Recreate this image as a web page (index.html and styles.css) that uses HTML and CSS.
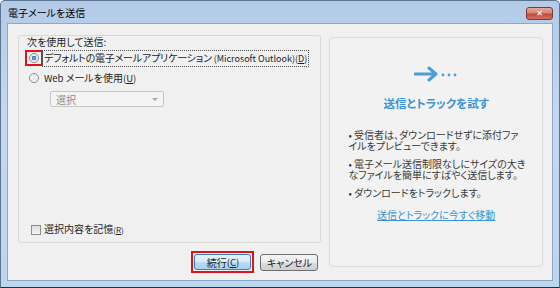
FILE: index.html
```html
<!DOCTYPE html>
<html>
  <head>
    <meta http-equiv="Content-type" content="text/html; charset=utf-8" />
    <link rel="stylesheet" href="styles.css">
  </head>
  <body>
    <div class="window">
      <div class="titlebar">
        <span class="title">電子メールを送信</span>
        <span class="close">&#x2715;</span>
      </div>
      <div class="client">
        <div class="leftcol">
          <div class="groupbox">
            <p class="caption">次を使用して送信:</p>
            <div class="row row1">
              <span class="hl"><span class="radio checked"></span></span>
              <span class="label focus tight">デフォルトの電子メールアプリケーション <span class="lat narrow">(Microsoft Outlook)(<u>D</u>)</span></span>
            </div>
            <div class="row row2">
              <span class="hl off"><span class="radio"></span></span>
              <span class="label"><span class="lat">Web</span> メールを使用<span class="lat">(<u>U</u>)</span></span>
            </div>
            <div class="select">
              <span>選択</span>
              <span class="caret"></span>
            </div>
            <div class="row remember">
              <span class="check"></span>
              <span class="label">選択内容を記憶<span class="lat small">(<u>R</u>)</span></span>
            </div>
          </div>
          <div class="buttons">
            <span class="hlbtn"><button class="btn default">続行<span class="lat">(<u>C</u>)</span></button></span>
            <button class="btn">キャンセル</button>
          </div>
        </div>
        <div class="panel">
          <svg class="arrow" width="44" height="16" viewBox="0 0 44 16">
            <path d="M1 8 H22 M15 2 L22 8 L15 14" fill="none" stroke="#4a9fd6" stroke-width="3" stroke-linecap="round" stroke-linejoin="round"/>
            <circle cx="29" cy="9" r="1.4" fill="#4a9fd6"/>
            <circle cx="35" cy="9" r="1.4" fill="#4a9fd6"/>
            <circle cx="41" cy="9" r="1.4" fill="#4a9fd6"/>
          </svg>
          <p class="ptitle">送信とトラックを試す</p>
          <p class="bullet">• 受信者は、ダウンロードせずに添付ファ<br>イルをプレビューできます。</p>
          <p class="bullet">• 電子メール送信制限なしにサイズの大き<br>なファイルを簡単にすばやく送信します。</p>
          <p class="bullet">• ダウンロードをトラックします。</p>
          <a class="link" href="#">送信とトラックに今すぐ移動</a>
        </div>
      </div>
    </div>
  </body>
</html>
```

FILE: styles.css
```css
/* base */
html,body{margin:0;padding:0;}
p{margin:0;padding:0}
body{font-family:"Noto Sans CJK JP","Liberation Sans",sans-serif;font-size:10px;color:#1e1e1e;font-feature-settings:"palt";}

/* frame */
.window{width:560px;height:288px;box-sizing:border-box;display:flex;flex-direction:column;padding:0 6px 6px;
	border:1px solid #5a7492;border-bottom-color:#1f3346;border-radius:5px 5px 0 0;
	background:linear-gradient(to bottom,#b3cbe7 0%,#c4d9ef 40%,#bed5ee 100%);}
.titlebar{height:22px;flex-shrink:0;display:flex;align-items:center;justify-content:space-between;}
.title{padding-left:1px;font-size:10px;color:#000;}
.close{width:27px;height:13px;box-sizing:border-box;display:flex;align-items:center;justify-content:center;margin-top:2px;
	border:1px solid #7a3a35;border-radius:3px;color:#fff;font-size:8px;font-weight:bold;font-family:"DejaVu Sans",sans-serif;
	background:linear-gradient(to bottom,#e9a99a 0%,#d98374 45%,#c24a3a 55%,#d37062 100%);}

.client{flex:1;min-height:0;display:flex;padding:11px 9px 6px 10px;background:#f0f0f0;border:1px solid #8ea8c6;}

/* left side */
.leftcol{width:304px;margin-right:8px;display:flex;flex-direction:column;}
.groupbox{height:208px;flex-shrink:0;box-sizing:border-box;border:1px solid #d9d9d9;border-radius:3px;padding:0 6px 5px;display:flex;flex-direction:column;}
.caption{line-height:12px;margin-left:2px;}
.row{display:flex;align-items:center;}
.row1{margin-top:2px;height:16px;}
.row2{margin-top:4px;height:16px;}
.hl{border:2px solid #e0121c;padding:1px 2px;display:flex;}
.hl.off{border-color:transparent;}
.radio{width:10px;height:10px;box-sizing:border-box;border-radius:50%;border:1px solid #8a8a8a;
	background:radial-gradient(circle,#e8e8e8 0%,#fbfbfb 100%);}
.radio.checked{background:radial-gradient(circle,#6fc1f0 0%,#2a74b4 35%,#e4e8ec 45%,#fafafa 100%);}
.label{line-height:14px;padding:0 1px;white-space:nowrap;}
.focus{outline:1px dotted #555;outline-offset:0;}
.tight{letter-spacing:-0.2px;}
.lat{font-size:9.5px;}
.lat.narrow{font-size:9px;letter-spacing:0;}
.lat.small{font-size:8px;}
.select{margin:5px 0 0 25px;width:114px;height:16px;box-sizing:border-box;border:1px solid #c6c6c6;border-radius:2px;background:#f4f4f4;
	display:flex;align-items:center;justify-content:space-between;padding:0 5px;color:#8c8c8c;}
.caret{width:0;height:0;border-left:3px solid transparent;border-right:3px solid transparent;border-top:3px solid #a8a8a8;}
.remember{margin-top:auto;padding-left:6px;}
.check{width:10px;height:10px;box-sizing:border-box;border:1px solid #8e8f8f;margin-right:2px;
	background:linear-gradient(to bottom,#dcdcdc,#f6f6f6);}

.buttons{display:flex;align-items:center;justify-content:flex-end;margin-top:8px;padding-right:3px;}
.hlbtn{border:2px solid #e0121c;padding:1px;display:flex;margin-right:6px;}
.btn{height:17px;box-sizing:border-box;padding:0;font-family:inherit;font-size:10px;color:#1e1e1e;border-radius:3px;
	border:1px solid #707070;background:linear-gradient(to bottom,#f4f4f4 0%,#ebebeb 50%,#dddddd 51%,#cfcfcf 100%);
	width:58px;display:flex;align-items:center;justify-content:center;font-feature-settings:"palt";}
.btn.default{width:57px;height:16px;border-color:#3c7fb1;background:linear-gradient(to bottom,#e6f3fb 0%,#d5eaf8 50%,#bcdcf2 51%,#a9d0ee 100%);}

/* right side */
.panel{width:214px;height:230px;margin-top:2px;box-sizing:border-box;border:1px solid #dcdcdc;border-radius:4px;background:#f2f2f2;
	display:flex;flex-direction:column;align-items:center;padding-top:28px;}
.arrow{display:block;}
.ptitle{margin-top:14px;font-size:11.5px;font-weight:bold;color:#3d93d3;line-height:14px;}
.bullet{align-self:flex-start;margin:19px 0 0 18px;line-height:11px;color:#3a3a3a;white-space:nowrap;}
.bullet + .bullet{margin-top:7px;}
.link{margin-top:11px;color:#3d93d3;text-decoration:underline;line-height:12px;}
```
